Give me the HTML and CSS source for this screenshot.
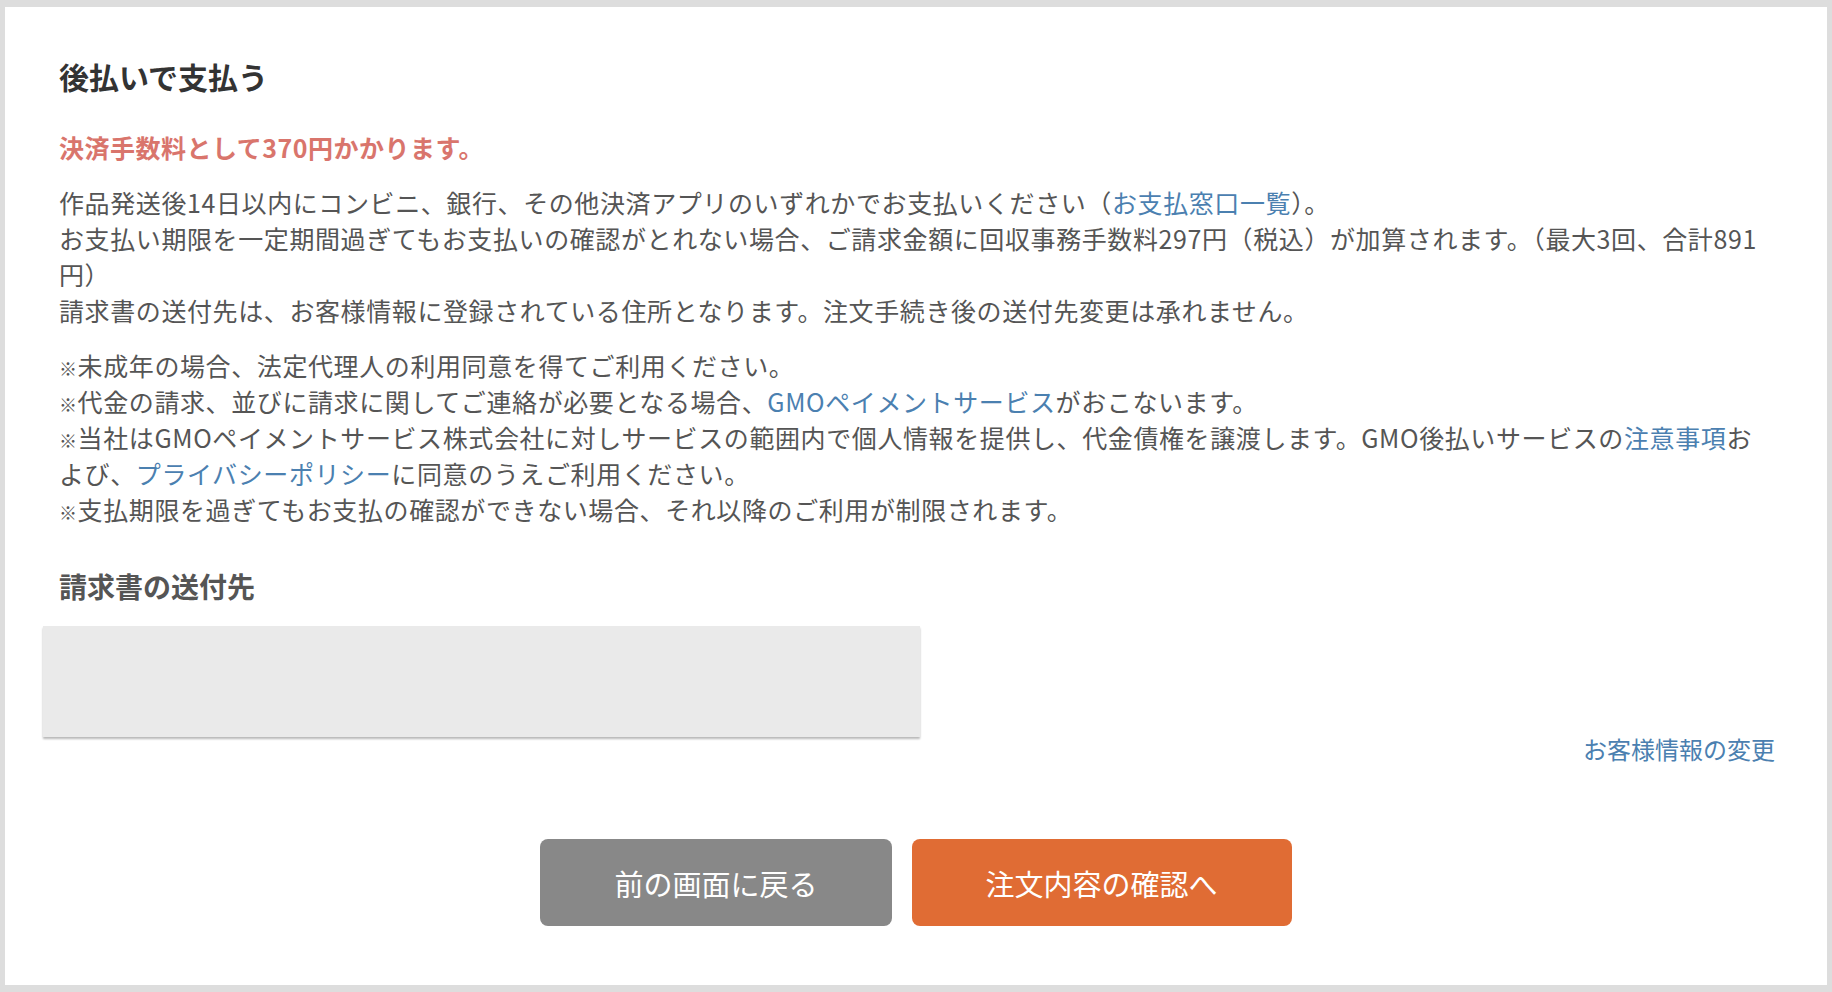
FILE: index.html
```html
<!DOCTYPE html>
<html lang="ja">
<head>
<meta charset="utf-8">
<title>後払いで支払う</title>
<link rel="stylesheet" href="styles.css">
</head>
<body>
<div class="panel">
  <h1 class="title">後払いで支払う</h1>
  <p class="fee">決済手数料として370円かかります。</p>
  <p class="text">作品発送後14日以内にコンビニ、銀行、その他決済アプリのいずれかでお支払いください（<a href="#" class="link">お支払窓口一覧</a>）。<br>お支払い期限を一定期間過ぎてもお支払いの確認がとれない場合、ご請求金額に回収事務手数料297円（税込）が加算されます。（最大3回、合計891円）<br>請求書の送付先は、お客様情報に登録されている住所となります。注文手続き後の送付先変更は承れません。</p>
  <p class="text"><span class="kome">※</span>未成年の場合、法定代理人の利用同意を得てご利用ください。<br><span class="kome">※</span>代金の請求、並びに請求に関してご連絡が必要となる場合、<a href="#" class="link">GMOペイメントサービス</a>がおこないます。<br><span class="kome">※</span>当社はGMOペイメントサービス株式会社に対しサービスの範囲内で個人情報を提供し、代金債権を譲渡します。GMO後払いサービスの<a href="#" class="link">注意事項</a>および、<a href="#" class="link">プライバシーポリシー</a>に同意のうえご利用ください。<br><span class="kome">※</span>支払期限を過ぎてもお支払の確認ができない場合、それ以降のご利用が制限されます。</p>
  <h2 class="subhead">請求書の送付先</h2>
  <div class="address"></div>
  <div class="change-row"><a href="#" class="link change">お客様情報の変更</a></div>
  <div class="actions">
    <button class="btn btn-back">前の画面に戻る</button>
    <button class="btn btn-next">注文内容の確認へ</button>
  </div>
</div>
</body>
</html>
```

FILE: styles.css
```css
html, body {
  margin: 0;
  padding: 0;
}
body {
  background: #dddddd;
  padding: 7px 5px 7px 5px;
  font-family: "Noto Sans CJK JP", "Noto Sans", sans-serif;
  color: #555555;
}
.panel {
  background: #ffffff;
  padding: 47px 52px 59px 54px;
  height: 978px;
  box-sizing: border-box;
}
.title {
  margin: 0 0 31px 0;
  font-size: 30px;
  line-height: 44px;
  font-weight: 700;
  color: #333333;
}
.fee {
  margin: 0 0 19px 0;
  font-size: 25px;
  line-height: 36px;
  font-weight: 700;
  letter-spacing: 0.5px;
  color: #d9756c;
}
.text {
  margin: 0 0 19px 0;
  font-size: 25px;
  line-height: 36px;
  letter-spacing: 0.6px;
  color: #555555;
}
.kome {
  font-size: 18px;
  line-height: 1;
}
.link {
  color: #4b80b0;
  text-decoration: none;
}
.subhead {
  margin: 38px 0 19px 0;
  font-size: 28px;
  line-height: 42px;
  font-weight: 700;
  color: #555555;
}
.address {
  margin-left: -16px;
  width: 877px;
  height: 111px;
  background: #eaeaea;
  box-shadow: 0 2px 2px rgba(0, 0, 0, 0.28);
}
.change-row {
  display: flex;
  justify-content: flex-end;
  margin-top: -2px;
}
.change {
  font-size: 24px;
  line-height: 28px;
}
.actions {
  display: flex;
  justify-content: center;
  gap: 20px;
  margin-top: 76px;
  margin-left: -2px;
}
.btn {
  border: none;
  border-radius: 8px;
  height: 87px;
  padding: 0 74px;
  font-family: "Noto Sans CJK JP", "Noto Sans", sans-serif;
  font-size: 29px;
  font-weight: 400;
  color: #ffffff;
  cursor: pointer;
}
.btn-back {
  background: #888888;
}
.btn-next {
  background: #e06c34;
}
```
